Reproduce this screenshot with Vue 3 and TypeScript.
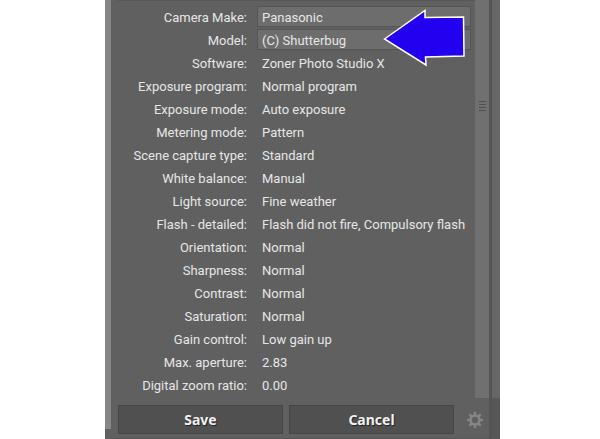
<script setup lang="ts">
import { ref } from 'vue'

interface Field {
  id: string
  label: string
  value: string
}

const editable = ref<Field[]>([
  { id: 'make', label: 'Camera Make:', value: 'Panasonic' },
  { id: 'model', label: 'Model:', value: '(C) Shutterbug' },
])

const details: Field[] = [
  { id: 'software', label: 'Software:', value: 'Zoner Photo Studio X' },
  { id: 'program', label: 'Exposure program:', value: 'Normal program' },
  { id: 'exposure', label: 'Exposure mode:', value: 'Auto exposure' },
  { id: 'metering', label: 'Metering mode:', value: 'Pattern' },
  { id: 'scene', label: 'Scene capture type:', value: 'Standard' },
  { id: 'balance', label: 'White balance:', value: 'Manual' },
  { id: 'light', label: 'Light source:', value: 'Fine weather' },
  { id: 'flash', label: 'Flash - detailed:', value: 'Flash did not fire, Compulsory flash' },
  { id: 'orientation', label: 'Orientation:', value: 'Normal' },
  { id: 'sharpness', label: 'Sharpness:', value: 'Normal' },
  { id: 'contrast', label: 'Contrast:', value: 'Normal' },
  { id: 'saturation', label: 'Saturation:', value: 'Normal' },
  { id: 'gain', label: 'Gain control:', value: 'Low gain up' },
  { id: 'aperture', label: 'Max. aperture:', value: '2.83' },
  { id: 'zoom', label: 'Digital zoom ratio:', value: '0.00' },
]

const teeth = [0, 45, 90, 135, 180, 225, 270, 315]
</script>

<template>
  <main class="page">
    <div class="window">
      <div class="rail"></div>
      <form class="panel" @submit.prevent>
        <div class="body">
          <div class="fields">
            <div v-for="f in editable" :key="f.id" class="row">
              <label class="name" :for="f.id">{{ f.label }}</label>
              <input :id="f.id" v-model="f.value" class="box" type="text" />
            </div>
            <dl class="details">
              <div v-for="f in details" :key="f.id" class="row">
                <dt class="name">{{ f.label }}</dt>
                <dd class="value">{{ f.value }}</dd>
              </div>
            </dl>
            <svg class="arrow" viewBox="0 0 84 60" width="84" height="60" aria-hidden="true">
              <path d="M1.500 31 L42 2.500 L42 9.500 L80.500 9 L81 48 L42.500 49 L43 57 Z" />
            </svg>
          </div>
          <div class="scrollbar">
            <div class="grip"><i></i><i></i><i></i><i></i></div>
          </div>
        </div>
        <div class="actions">
          <button class="action" type="submit">Save</button>
          <button class="action" type="button">Cancel</button>
          <button class="gear" type="button" aria-label="Settings">
            <svg viewBox="0 0 16 16" width="16" height="16">
              <circle cx="8" cy="8" r="4.400" fill="none" stroke="currentColor" stroke-width="2.400" />
              <path
                v-for="a in teeth"
                :key="a"
                d="M6.500 3.400 L6.900 0 H9.100 L9.500 3.400 Z"
                fill="currentColor"
                :transform="`rotate(${a} 8 8)`"
              />
            </svg>
          </button>
        </div>
      </form>
      <div class="splitter"></div>
      <div class="neighbour"><div class="neighbour-body"></div></div>
    </div>
  </main>
</template>

<style>
body {
  background: #fff;
}
</style>

<style scoped>
.page {
  padding: 0 100px 0 105px;
  font-family: Roboto, 'Noto Sans', sans-serif;
  font-size: 13px;
  line-height: 23px;
  color: #e6e6e6;
}
.window {
  display: flex;
  background: #606060;
}
.rail {
  width: 6px;
  margin-bottom: 10px;
  background: #868686;
}
.panel {
  flex: 1;
  min-width: 0;
}
.body {
  display: flex;
}
.fields {
  position: relative;
  flex: 1;
  min-width: 0;
  margin-left: 7px;
  padding: 5px 4px 1px 0;
  border-top: 1px solid #575757;
}
.details {
  margin: 0;
}
.row {
  display: flex;
  height: 23px;
}
.name {
  flex: none;
  width: 129px;
  margin-right: 10px;
  text-align: right;
  white-space: nowrap;
}
.value {
  margin: 0;
  padding-left: 5px;
  white-space: nowrap;
}
.box {
  box-sizing: border-box;
  flex: 1;
  min-width: 0;
  height: 21px;
  padding: 1px 4px 0;
  border: 1px solid #555;
  border-radius: 0;
  outline: 0;
  background: #6d6d6d;
  color: inherit;
  font: inherit;
}
.arrow {
  position: absolute;
  top: 7px;
  right: 8px;
}
.arrow path {
  fill: #2400f0;
  stroke: #fff;
  stroke-width: 1.500;
}
.scrollbar {
  display: flex;
  justify-content: center;
  width: 14px;
  background: #707070;
}
.grip {
  display: flex;
  flex-direction: column;
  gap: 2px;
  width: 7px;
  margin-top: 101px;
}
.grip i {
  height: 1px;
  background: #505050;
}
.actions {
  display: flex;
  gap: 6px;
  padding: 7px 6px 4px 7px;
  border-bottom: 1px solid #575757;
}
.action {
  flex: 1;
  height: 29px;
  padding: 0;
  border: 1px solid #464646;
  border-radius: 0;
  background: #505050;
  color: #f0f0f0;
  font: bold 14px 'Noto Sans', 'Open Sans', sans-serif;
  text-shadow: 1px 1px 1px #222;
}
.gear {
  display: flex;
  align-items: center;
  justify-content: center;
  width: 16px;
  margin-left: 7px;
  padding: 0;
  border: 0;
  background: none;
  color: #868686;
}
.splitter {
  width: 3px;
  background: #555;
}
.neighbour {
  display: flex;
  width: 8px;
  padding-bottom: 41px;
  box-sizing: border-box;
  background: #575757;
}
.neighbour-body {
  flex: 1;
  background: #666;
}
</style>
